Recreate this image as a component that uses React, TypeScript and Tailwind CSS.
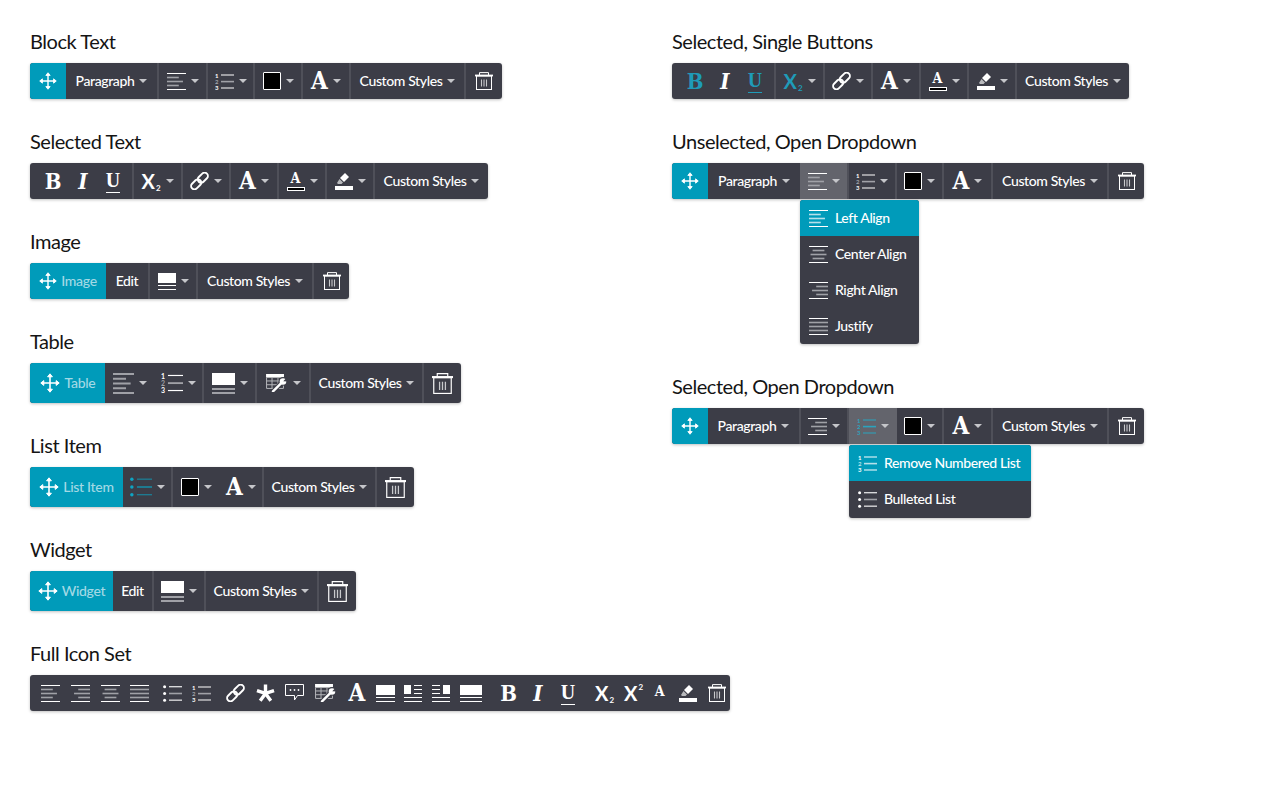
import { ReactNode } from "react";

const GRAY = "#a0a1a7";
const TEAL_DIM = "#2ba3bd";

function Caret() {
  return <span className="ml-[5px] h-0 w-0 shrink-0 border-x-[4px] border-t-[4px] border-x-transparent border-t-[#c5c6ca]" />;
}

function Seg({ className, children, caret }: { className: string; children: ReactNode; caret?: boolean }) {
  return (
    <div className={`flex h-full shrink-0 items-center justify-center ${className}`}>
      {children}
      {caret && <Caret />}
    </div>
  );
}

function Section({ title, children }: { title: string; children: ReactNode }) {
  return (
    <section className="mb-[31px]">
      <h2 className="mb-2 h-[25px] text-[20px] leading-[23px] tracking-[-0.45px] text-[#141414]">{title}</h2>
      {children}
    </section>
  );
}

function Bar({ tall, children }: { tall?: boolean; children: ReactNode }) {
  return (
    <div className={`flex w-max overflow-hidden rounded-[3px] bg-[#3c3d47] text-white shadow-[0_1px_3px_rgba(0,0,0,0.25)] ${tall ? "h-10" : "h-9"}`}>
      {children}
    </div>
  );
}

function Label({ children }: { children: ReactNode }) {
  return <span className="mb-[2px] text-[14px] font-medium tracking-[-0.38px] text-white">{children}</span>;
}

function TealLabel({ children }: { children: ReactNode }) {
  return <span className="mb-[2px] text-[14px] font-medium tracking-[-0.3px] text-[#a3d9e5]">{children}</span>;
}

function MoveIcon({ size = 18 }: { size?: number }) {
  return (
    <svg width={size} height={size} viewBox="0 0 20 20" fill="#fff" stroke="#fff" strokeLinejoin="round">
      <path d="M10 3v14M3 10h14" strokeWidth="1.6" fill="none" />
      <path d="M10 .8 7.6 3.8h4.8zM10 19.2l-2.4-3h4.8zM.8 10l3-2.4v4.8zM19.2 10l-3-2.4v4.8z" strokeWidth="1" />
    </svg>
  );
}

function TrashIcon({ size = 18 }: { size?: number }) {
  return (
    <svg width={size} height={size} viewBox="0 0 18 18" fill="none">
      <path d="M4.5 3V.6h9V3" stroke="#fff" strokeWidth="1" />
      <rect x="0" y="2.6" width="18" height="1.8" fill="#fff" />
      <rect x="1.5" y="4" width="15" height="13.5" stroke="#fff" strokeWidth="1" />
      <path d="M6.5 7.5v7M9 7.5v7M11.5 7.5v7" stroke="#c8c9cc" strokeWidth="1.1" />
    </svg>
  );
}

function AlignIcon({ kind, color1 = "#fff", color2 = GRAY, tall }: { kind: "left" | "center" | "right" | "justify"; color1?: string; color2?: string; tall?: boolean }) {
  const w = tall ? 21 : 19;
  const h = tall ? 21 : 17;
  const step = (h - (tall ? 2 : 1)) / 4;
  const widths = kind === "justify" ? [w, w, w, w, w] : [w, w * 0.62, w * 0.84, w * 0.62, w];
  return (
    <svg width={w} height={h} viewBox={`0 0 ${w} ${h}`}>
      {widths.map((lw, i) => {
        const x = kind === "left" ? 0 : kind === "right" ? w - lw : (w - lw) / 2;
        const edge = i === 0 || i === 4;
        const lh = tall ? 2 : edge ? 1 : 1.6;
        const y = tall || edge ? i * step : i * step - 0.3;
        return <rect key={i} x={x} y={y} width={lw} height={lh} fill={edge ? color1 : color2} />;
      })}
    </svg>
  );
}

function NumIcon({ color = "#fff", mid = GRAY, tall }: { color?: string; mid?: string; tall?: boolean }) {
  return (
    <svg width={tall ? 22 : 19} height={tall ? 20 : 17} viewBox="0 0 19 17">
      <g fill={color} fontSize="6" fontWeight="700" fontFamily="Lato, sans-serif">
        <text x="0" y="5">1</text>
        <text x="0" y="11" fill={mid}>2</text>
        <text x="0" y="17">3</text>
      </g>
      <rect x="6" y="1.5" width="13" height="1" fill={color} />
      <rect x="6" y="7.8" width="13" height="1.6" fill={mid} />
      <rect x="6" y="14.5" width="13" height="1" fill={color} />
    </svg>
  );
}

function BulletIcon({ color = "#fff", mid = GRAY, dot = "#fff", tall }: { color?: string; mid?: string; dot?: string; tall?: boolean }) {
  return (
    <svg width={tall ? 22 : 19} height={tall ? 20 : 17} viewBox="0 0 19 17">
      <circle cx="1.6" cy="1.8" r="1.5" fill={dot} />
      <circle cx="1.6" cy="8.5" r="1.5" fill={dot} />
      <circle cx="1.6" cy="15.2" r="1.5" fill={dot} />
      <rect x="6" y="1.2" width="13" height="1.1" fill={color} />
      <rect x="6" y="7.7" width="13" height="1.6" fill={mid} />
      <rect x="6" y="14.6" width="13" height="1.1" fill={color} />
    </svg>
  );
}

function BlockIcon({ tall, w = 18 }: { tall?: boolean; w?: number }) {
  const width = tall ? 23 : w;
  return (
    <svg width={width} height={tall ? 21 : 17} viewBox={`0 0 ${width} ${tall ? 21 : 17}`} shapeRendering="crispEdges">
      <rect width={width} height={tall ? 12 : 10} fill="#fff" />
      <rect y={tall ? 15 : 12} width={width} height={tall ? 2 : 1} fill={tall ? GRAY : "#fff"} />
      <rect y={tall ? 19 : 16} width={width} height={tall ? 2 : 1} fill={tall ? GRAY : "#fff"} />
    </svg>
  );
}

function SideBlockIcon({ side }: { side: "left" | "right" }) {
  const bx = side === "left" ? 0 : 11;
  const lx = side === "left" ? 10 : 0;
  return (
    <svg width="18" height="17" viewBox="0 0 18 17" shapeRendering="crispEdges">
      <rect x={bx} width="7" height="9" fill="#fff" />
      <rect x={lx} y="0" width="8" height="1" fill="#fff" />
      <rect x={lx} y="4" width="8" height="1" fill="#fff" />
      <rect x={lx} y="8" width="8" height="1" fill="#fff" />
      <rect y="12" width="18" height="1" fill="#fff" />
      <rect y="16" width="18" height="1" fill="#fff" />
    </svg>
  );
}

function Swatch() {
  return <span className="block h-[18px] w-[18px] rounded-[1px] border border-white bg-black" />;
}

function Serif({ children, size, color = "text-white", italic }: { children: ReactNode; size: string; color?: string; italic?: boolean }) {
  return <span className={`font-bold leading-none [font-family:'DejaVu_Serif_Condensed','DejaVu_Serif',serif] ${size} ${color} ${italic ? "italic" : ""}`}>{children}</span>;
}

function BigA() {
  return <Serif size="text-[24px]">A</Serif>;
}

function Underlined({ color = "text-white", border = "border-white" }: { color?: string; border?: string }) {
  return (
    <span className={`block border-b pb-[2px] ${border}`}>
      <span className={`block font-bold leading-none [font-family:'Liberation_Serif',serif] text-[20px] ${color}`}>U</span>
    </span>
  );
}

function Sub({ sup, color = "text-white" }: { sup?: boolean; color?: string }) {
  return (
    <span className={`flex font-bold leading-none ${color}`}>
      <span className="text-[20px]">X</span>
      <span className={`ml-px text-[8px] ${sup ? "mt-0" : "mt-[13px]"}`}>2</span>
    </span>
  );
}

function LinkIcon() {
  return (
    <svg width="19" height="18" viewBox="0 0 19 18" fill="none" stroke="#fff" strokeWidth="1.9">
      <g transform="rotate(-45 9.5 9)">
        <rect x="-1" y="5.7" width="11.5" height="6.6" rx="3.3" />
        <rect x="8.5" y="5.7" width="11.5" height="6.6" rx="3.3" />
      </g>
    </svg>
  );
}

function FontColorIcon() {
  return (
    <span className="flex w-[18px] flex-col items-center">
      <Serif size="text-[14px]">A</Serif>
      <span className="mt-[2px] block h-[4px] w-[18px] border border-white bg-black" />
    </span>
  );
}

function HighlightIcon() {
  return (
    <svg width="18" height="18" viewBox="0 0 18 18">
      <path d="M10 1 14 5 9 10 5 6z" fill="#fff" />
      <path d="M4.5 7 8 10.5 6.5 12H3l-1-1z" fill="#b9babd" />
      <rect y="14" width="18" height="4" fill="#fff" />
    </svg>
  );
}

function TableToolIcon({ w = 22 }: { w?: number }) {
  return (
    <svg width={w} height={w * 0.86} viewBox="0 0 22 19" fill="none">
      <rect x="0" y="0" width="18" height="3.5" fill="#fff" />
      <path d="M.5 3.5h17v11H.5zM.5 7h17M.5 10.8h17M6 3.5v11M12 3.5v11" stroke="#b4b5b9" strokeWidth="1" />
      <path d="M7 17.5 16 8.5" stroke="#3c3d47" strokeWidth="4.5" strokeLinecap="round" />
      <circle cx="17" cy="7.5" r="4.4" fill="#3c3d47" />
      <path d="M7 17.5 15.5 9" stroke="#fff" strokeWidth="2.4" strokeLinecap="round" />
      <circle cx="17" cy="7.5" r="3.3" fill="#fff" />
      <path d="M17.3 7.3 20.8 3.6 22 7.6z" fill="#3c3d47" />
    </svg>
  );
}

function CommentIcon() {
  return (
    <svg width="19" height="18" viewBox="0 0 19 18" fill="none">
      <path d="M.5.5h18v11h-6L9.5 16v-4.5H.5z" stroke="#fff" strokeWidth="1" />
      <circle cx="5.5" cy="6" r="0.9" fill="#fff" />
      <circle cx="9.5" cy="6" r="0.9" fill="#fff" />
      <circle cx="13.5" cy="6" r="0.9" fill="#fff" />
    </svg>
  );
}

function StarIcon() {
  return (
    <svg width="19" height="18" viewBox="-10 -10 20 19" stroke="#fff" strokeWidth="3.6">
      <path d="M0 0V-9.5M0 0 9 -3M0 0 5.6 7.7M0 0-5.6 7.7M0 0-9 -3" />
    </svg>
  );
}

const sep = "border-r-2 border-[#4f5059]";

function BIU({ teal }: { teal?: boolean }) {
  const c = teal ? "text-[#1f9bb8]" : "text-white";
  return (
    <Seg className={`${sep} w-[104px] pl-[4px]`}>
      <span className="flex w-[18px] justify-center">
        <Serif size="text-[22px]" color={c}>B</Serif>
      </span>
      <span className="ml-[12px] flex w-[18px] justify-center">
        <Serif size="text-[22px]" italic>I</Serif>
      </span>
      <span className="ml-[12px] flex w-[18px] justify-center">
        <Underlined color={c} border={teal ? "border-[#1f9bb8]" : "border-white"} />
      </span>
    </Seg>
  );
}

function OpenBar({ open }: { open: "align" | "list" }) {
  return (
    <Bar>
      <Seg className="w-9 bg-[#009bba]"><MoveIcon /></Seg>
      <Seg className={open === "align" ? `w-[92px]` : `${sep} w-[93px]`} caret><Label>Paragraph</Label></Seg>
      <Seg className={open === "align" ? `${sep} w-[49px] bg-[#63646c]` : `${sep} w-[48px]`} caret>
        <AlignIcon kind={open === "list" ? "right" : "left"} />
      </Seg>
      <Seg className={open === "list" ? `w-[48px] bg-[#63646c]` : `${sep} w-[48px]`} caret>
        {open === "list" ? <NumIcon color={TEAL_DIM} mid={TEAL_DIM} /> : <NumIcon />}
      </Seg>
      <Seg className={`${sep} w-[47px]`} caret><Swatch /></Seg>
      <Seg className={`${sep} w-[49px]`} caret><BigA /></Seg>
      <Seg className={`${sep} w-[116px]`} caret><Label>Custom Styles</Label></Seg>
      <Seg className="w-[35px]"><TrashIcon /></Seg>
    </Bar>
  );
}

function TextBar({ selected }: { selected?: boolean }) {
  return (
    <Bar>
      <BIU teal={selected} />
      <Seg className={`${sep} w-[49px]`} caret><Sub color={selected ? "text-[#1f9bb8]" : "text-white"} /></Seg>
      <Seg className={`${sep} w-[48px]`} caret><LinkIcon /></Seg>
      <Seg className={`${sep} w-[48px]`} caret><BigA /></Seg>
      <Seg className={`${sep} w-[48px]`} caret><FontColorIcon /></Seg>
      <Seg className={`${sep} w-[48px]`} caret><HighlightIcon /></Seg>
      <Seg className={selected ? "w-[112px]" : "w-[113px]"} caret><Label>Custom Styles</Label></Seg>
    </Bar>
  );
}

function Menu({ className, children }: { className: string; children: ReactNode }) {
  return <div className={`mt-px overflow-hidden rounded-[3px] bg-[#3c3d47] shadow-[0_1px_3px_rgba(0,0,0,0.25)] ${className}`}>{children}</div>;
}

function MenuItem({ icon, text, active }: { icon: ReactNode; text: string; active?: boolean }) {
  return (
    <div className={`flex h-9 items-center gap-[7px] pl-[9px] ${active ? "bg-[#009bba]" : ""}`}>
      {icon}
      <Label>{text}</Label>
    </div>
  );
}

export default function App() {
  return (
    <div className="flex min-h-screen overflow-hidden bg-white pl-[30px] pt-[30px] [font-family:Lato,sans-serif]">
      <div className="w-[642px] shrink-0">
        <Section title="Block Text">
          <Bar>
            <Seg className="w-9 bg-[#009bba]"><MoveIcon /></Seg>
            <Seg className={`${sep} w-[93px]`} caret><Label>Paragraph</Label></Seg>
            <Seg className={`${sep} w-[49px]`} caret><AlignIcon kind="left" /></Seg>
            <Seg className={`${sep} w-[47px]`} caret><NumIcon /></Seg>
            <Seg className={`${sep} w-[48px]`} caret><Swatch /></Seg>
            <Seg className={`${sep} w-[48px]`} caret><BigA /></Seg>
            <Seg className={`${sep} w-[115px]`} caret><Label>Custom Styles</Label></Seg>
            <Seg className="w-[36px]"><TrashIcon /></Seg>
          </Bar>
        </Section>

        <Section title="Selected Text">
          <TextBar />
        </Section>

        <Section title="Image">
          <Bar>
            <Seg className="w-[76px] gap-[4px] bg-[#009bba]"><MoveIcon /><TealLabel>Image</TealLabel></Seg>
            <Seg className={`${sep} w-[44px]`}><Label>Edit</Label></Seg>
            <Seg className={`${sep} w-[48px]`} caret><BlockIcon /></Seg>
            <Seg className={`${sep} w-[116px]`} caret><Label>Custom Styles</Label></Seg>
            <Seg className="w-[35px]"><TrashIcon /></Seg>
          </Bar>
        </Section>

        <Section title="Table">
          <Bar tall>
            <Seg className="w-[75px] gap-[5px] bg-[#009bba]"><MoveIcon size={20} /><TealLabel>Table</TealLabel></Seg>
            <Seg className="w-[50px]" caret><AlignIcon kind="left" color1={GRAY} tall /></Seg>
            <Seg className={`${sep} w-[49px]`} caret><NumIcon tall /></Seg>
            <Seg className={`${sep} w-[53px]`} caret><BlockIcon tall /></Seg>
            <Seg className={`${sep} w-[54px]`} caret><TableToolIcon /></Seg>
            <Seg className={`${sep} w-[113px]`} caret><Label>Custom Styles</Label></Seg>
            <Seg className="w-[37px]"><TrashIcon size={21} /></Seg>
          </Bar>
        </Section>

        <Section title="List Item">
          <Bar tall>
            <Seg className="w-[93px] gap-[4px] bg-[#009bba]"><MoveIcon size={20} /><TealLabel>List Item</TealLabel></Seg>
            <Seg className={`${sep} w-[50px]`} caret>
              <BulletIcon color="#1d7f96" mid="#1d7f96" dot="#0ea4c3" tall />
            </Seg>
            <Seg className="w-[47px]" caret><Swatch /></Seg>
            <Seg className={`${sep} w-[44px]`} caret><BigA /></Seg>
            <Seg className={`${sep} w-[113px]`} caret><Label>Custom Styles</Label></Seg>
            <Seg className="w-[37px]"><TrashIcon size={21} /></Seg>
          </Bar>
        </Section>

        <Section title="Widget">
          <Bar tall>
            <Seg className="w-[83px] gap-[4px] bg-[#009bba]"><MoveIcon size={20} /><TealLabel>Widget</TealLabel></Seg>
            <Seg className={`${sep} w-[41px]`}><Label>Edit</Label></Seg>
            <Seg className={`${sep} w-[52px]`} caret><BlockIcon tall /></Seg>
            <Seg className={`${sep} w-[113px]`} caret><Label>Custom Styles</Label></Seg>
            <Seg className="w-[37px]"><TrashIcon size={21} /></Seg>
          </Bar>
        </Section>

        <Section title="Full Icon Set">
          <Bar>
            <div className="flex h-full w-[700px] items-center text-white">
              <div className="ml-[11px]"><AlignIcon kind="left" /></div>
              <div className="ml-[11px]"><AlignIcon kind="right" /></div>
              <div className="ml-[11px]"><AlignIcon kind="center" /></div>
              <div className="ml-[10px]"><AlignIcon kind="justify" /></div>
              <div className="ml-[14px]"><BulletIcon /></div>
              <div className="ml-[10px]"><NumIcon /></div>
              <div className="ml-[15px]"><LinkIcon /></div>
              <div className="ml-[11px]"><StarIcon /></div>
              <div className="ml-[10px]"><CommentIcon /></div>
              <div className="ml-[11px]"><TableToolIcon /></div>
              <div className="ml-[11px] flex w-[18px] justify-center"><BigA /></div>
              <div className="ml-[10px]"><BlockIcon w={19} /></div>
              <div className="ml-[9px]"><SideBlockIcon side="left" /></div>
              <div className="ml-[10px]"><SideBlockIcon side="right" /></div>
              <div className="ml-[10px]"><BlockIcon w={22} /></div>
              <div className="ml-[19px] flex w-[15px] justify-center"><Serif size="text-[22px]">B</Serif></div>
              <div className="ml-[16px] flex w-[12px] justify-center"><Serif size="text-[22px]" italic>I</Serif></div>
              <div className="ml-[17px] flex w-[14px] justify-center"><Underlined /></div>
              <div className="ml-[20px]"><Sub /></div>
              <div className="ml-[10px]"><Sub sup /></div>
              <div className="ml-[11px] mb-[4px] flex w-[11px] justify-center"><Serif size="text-[14px]">A</Serif></div>
              <div className="ml-[14px]"><HighlightIcon /></div>
              <div className="ml-[11px]"><TrashIcon /></div>
            </div>
          </Bar>
        </Section>
      </div>

      <div className="w-[500px] shrink-0">
        <Section title="Selected, Single Buttons">
          <TextBar selected />
        </Section>

        <Section title="Unselected, Open Dropdown">
          <OpenBar open="align" />
          <Menu className="ml-[128px] w-[119px]">
            <MenuItem active icon={<AlignIcon kind="left" color2="#b6e0ea" />} text="Left Align" />
            <MenuItem icon={<AlignIcon kind="center" />} text="Center Align" />
            <MenuItem icon={<AlignIcon kind="right" />} text="Right Align" />
            <MenuItem icon={<AlignIcon kind="justify" />} text="Justify" />
          </Menu>
        </Section>

        <Section title="Selected, Open Dropdown">
          <OpenBar open="list" />
          <Menu className="ml-[177px] w-[182px] pb-px">
            <MenuItem active icon={<NumIcon mid="#b6e0ea" />} text="Remove Numbered List" />
            <MenuItem icon={<BulletIcon />} text="Bulleted List" />
          </Menu>
        </Section>
      </div>
    </div>
  );
}
